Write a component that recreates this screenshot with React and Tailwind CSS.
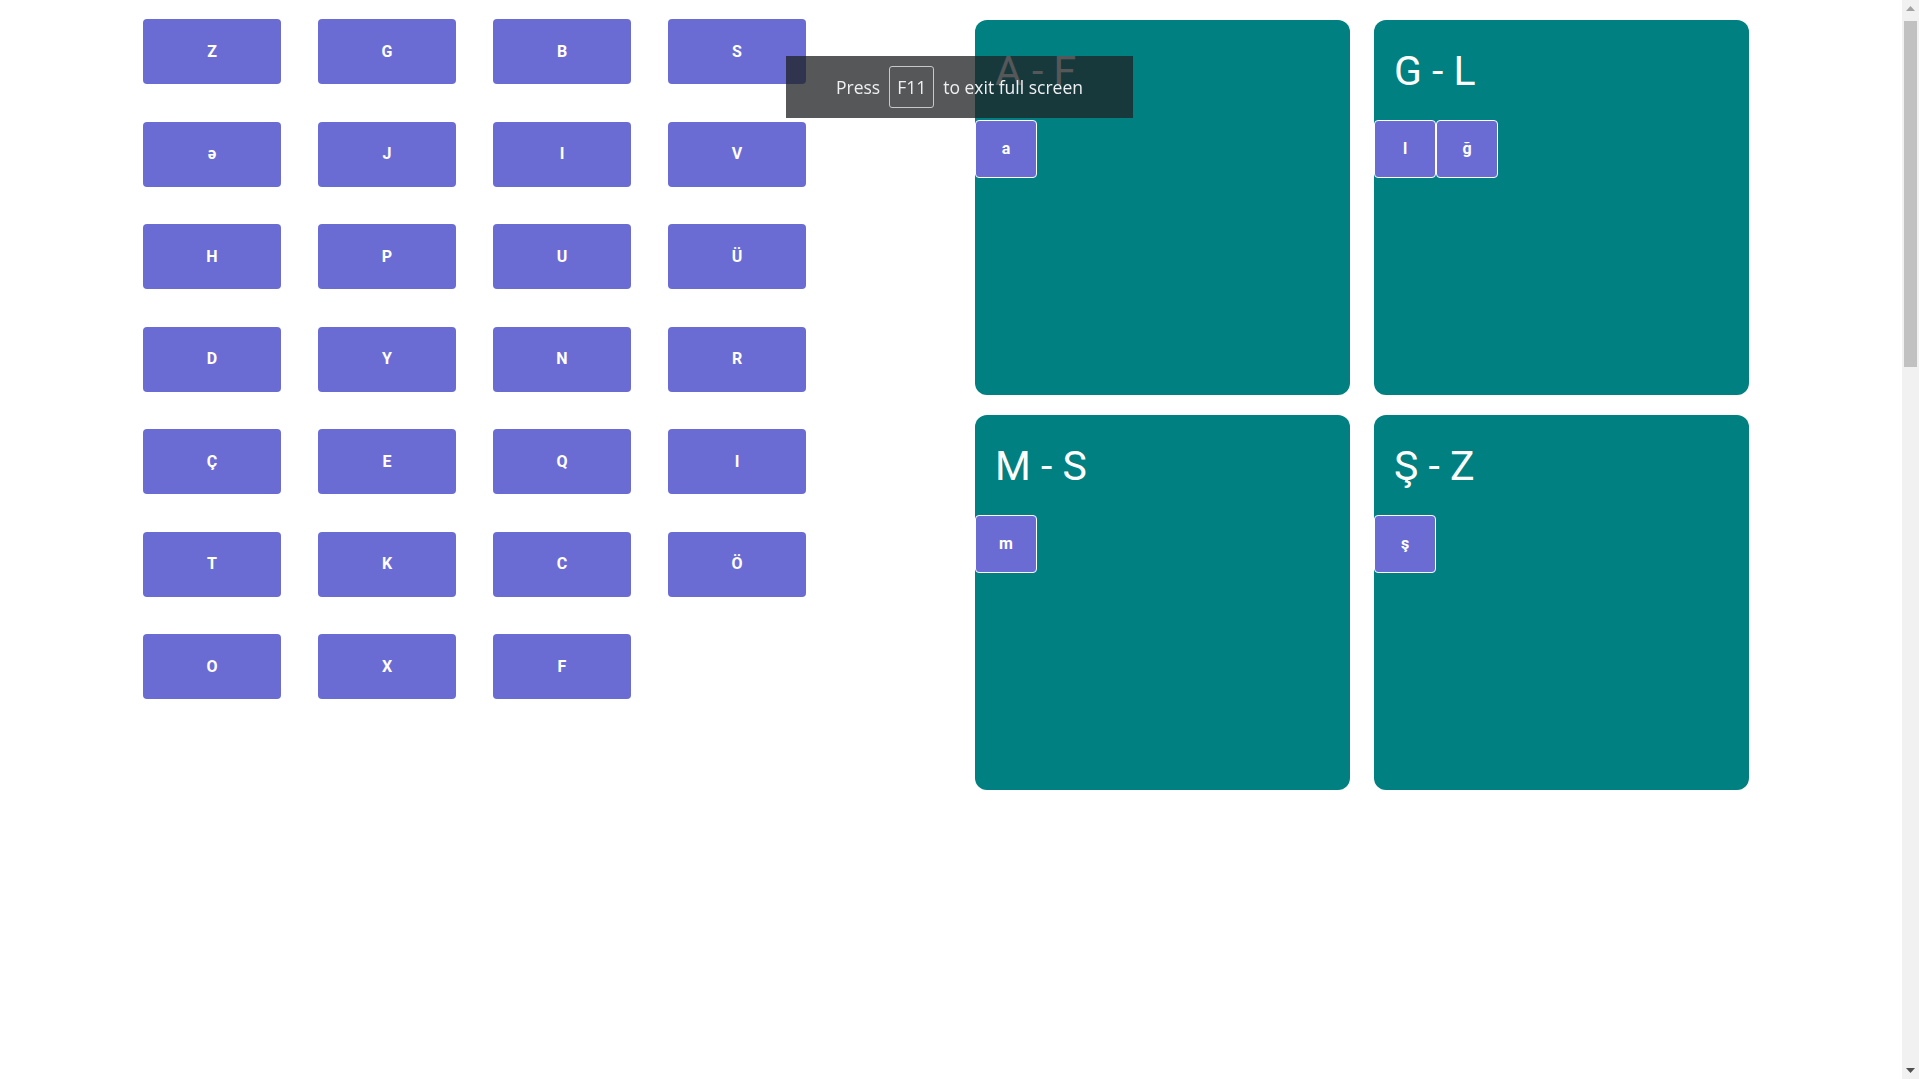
import React from 'react';

const letters = ["Z", "G", "B", "S", "ə", "J", "I", "V", "H", "P", "U", "Ü", "D", "Y", "N", "R", "Ç", "E", "Q", "I", "T", "K", "C", "Ö", "O", "X", "F"];

const groups = [
  { title: "A - F", items: ["a"] },
  { title: "G - L", items: ["l", "ğ"] },
  { title: "M - S", items: ["m"] },
  { title: "Ş - Z", items: ["ş"] },
];

function FullscreenHint() {
  return (
    <div className="fixed left-[786px] top-[56px] w-[347px] h-[62px] bg-[rgba(32,34,37,0.76)] flex items-center justify-center text-[#eef0f2] text-[17.5px] font-['Open_Sans',sans-serif]">
      <span>Press</span>
      <span className="mx-[9px] h-[42px] px-[7px] flex items-center border border-[#c8c8c8] rounded-[3px]">F11</span>
      <span>to exit full screen</span>
    </div>
  );
}

// classic page scrollbar, as seen on the right edge of the window
function Scrollbar() {
  return (
    <div className="fixed right-0 top-0 w-[17px] h-screen bg-[#f1f1f1] flex flex-col">
      <div className="h-[17px] flex items-center justify-center">
        <svg width="9" height="5" viewBox="0 0 9 5"><path d="M0 5 L4.5 0 L9 5 Z" fill="#a3a3a3" /></svg>
      </div>
      <div className="mt-[4px] mx-[2px] h-[346px] bg-[#c1c1c1]" />
      <div className="flex-1" />
      <div className="h-[17px] flex items-center justify-center">
        <svg width="9" height="5" viewBox="0 0 9 5"><path d="M0 0 L4.5 5 L9 0 Z" fill="#505050" /></svg>
      </div>
    </div>
  );
}

export default function App() {
  return (
    <div className="min-h-[3260px] bg-white flex font-['Roboto',sans-serif]">
      <div className="w-[975px] shrink-0 pl-[143px] pt-[19px]">
        <div className="grid grid-cols-[repeat(4,138px)] gap-x-[37px] gap-y-[37.5px]">
          {letters.map((l, i) => (
            <div
              key={i}
              className="h-[65px] rounded-[4px] bg-[#6b6cd3] text-white text-[16px] font-bold flex items-center justify-center"
            >
              {l}
            </div>
          ))}
        </div>
      </div>

      <div className="pt-[20px]">
        <div className="grid grid-cols-[375px_375px] gap-x-[24px] gap-y-[20px]">
          {groups.map((g) => (
            <div key={g.title} className="h-[375px] rounded-[12px] bg-[#008080]">
              <div className="h-[100px] pl-[20px] pt-[27px] text-[41px] leading-[48px] text-white">
                {g.title}
              </div>
              <div className="flex">
                {g.items.map((it) => (
                  <div
                    key={it}
                    className="w-[62px] h-[58px] rounded-[4px] border border-white bg-[#6b6cd3] text-white text-[16px] font-bold flex items-center justify-center"
                  >
                    {it}
                  </div>
                ))}
              </div>
            </div>
          ))}
        </div>
      </div>

      <FullscreenHint />
      <Scrollbar />
    </div>
  );
}
